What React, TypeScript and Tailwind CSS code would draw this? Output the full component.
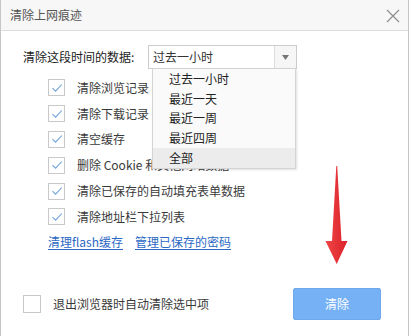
import React from "react";

const Check = () => (
  <svg width="12" height="10" viewBox="0 0 12 10" className="block">
    <path d="M1.5 5.2 L4.6 8.2 L10.8 1.5" fill="none" stroke="#6fa3db" strokeWidth="1.1" />
  </svg>
);

const CheckRow = ({ label, children }: { label?: string; children?: React.ReactNode }) => (
  <div className="h-[25.8px] flex items-center">
    <div className="w-[17px] h-[17px] border border-[#c9c9c9] bg-white flex items-center justify-center">
      <Check />
    </div>
    <span className="ml-[12px] text-[12px] text-[#3a3a3a] whitespace-nowrap leading-none">{label}{children}</span>
  </div>
);

export default function App() {
  const items = ["过去一小时", "最近一天", "最近一周", "最近四周", "全部"];
  return (
    <div className="w-[410px] h-[336px] bg-white relative overflow-hidden font-['Microsoft_YaHei','Noto_Sans_CJK_SC',sans-serif]">
      <div className="w-[409px] h-full border-l border-r border-[#c6c6c6] flex flex-col">
        <div className="h-[31px] shrink-0 bg-[#f7f7f7] border-b border-[#dedede] flex items-center justify-between pl-[9px] pr-[8px]">
          <span className="text-[12px] text-[#555] leading-none">清除上网痕迹</span>
          <svg width="14" height="14" viewBox="0 0 14 14" className="block mt-[1px]">
            <path d="M1 1 L13 13 M13 1 L1 13" stroke="#8a8a8a" strokeWidth="1.1" fill="none" />
          </svg>
        </div>
        <div className="pl-[22px] pt-[14px]">
          <div className="flex items-center h-[24px]">
            <span className="text-[12px] text-[#222] w-[125px] leading-none whitespace-nowrap">清除这段时间的数据:</span>
            <div className="relative w-[149px] h-[24px] border border-[#cccccc] bg-white flex items-center">
              <span className="pl-[4px] flex-1 text-[12px] text-[#333] leading-none">过去一小时</span>
              <div className="w-[22px] h-full border-l border-[#dddddd] bg-[#f6f6f6] flex items-center justify-center">
                <svg width="7" height="5" viewBox="0 0 7 5" className="block">
                  <path d="M0 0 L7 0 L3.5 5 Z" fill="#777" />
                </svg>
              </div>
              <div className="absolute left-[3px] top-[22px] w-[144px] h-[101px] bg-[#fafafa] border border-[#d4d4d4] shadow-[1px_1px_2px_rgba(0,0,0,0.12)] z-10 flex flex-col">
                {items.map((t, i) => (
                  <div
                    key={t}
                    className={
                      "h-[20px] flex items-center pl-[16px] text-[12px] text-[#222] leading-none " +
                      (i === 4 ? "bg-[#ececec]" : "")
                    }
                  >
                    {t}
                  </div>
                ))}
              </div>
            </div>
          </div>
          <div className="pl-[25px] mt-[6px]">
            <CheckRow label="清除浏览记录" />
            <CheckRow label="清除下载记录" />
            <CheckRow label="清空缓存" />
            <CheckRow label="删除 Cookie 和其他网站数据" />
            <CheckRow label="清除已保存的自动填充表单数据" />
            <CheckRow label="清除地址栏下拉列表" />
            <div className="h-[24px] flex items-center gap-[12px] text-[12px] text-[#2b68c4] leading-none">
              <span className="underline underline-offset-[2px]">清理flash缓存</span>
              <span className="underline underline-offset-[2px]">管理已保存的密码</span>
            </div>
          </div>
        </div>
        <div className="mt-auto pb-[16px] pl-[22px] pr-[27px] flex items-center justify-between">
          <div className="flex items-center">
            <div className="w-[18px] h-[18px] border border-[#c9c9c9] bg-white" />
            <span className="ml-[12px] text-[12px] text-[#3a3a3a] leading-none">退出浏览器时自动清除选中项</span>
          </div>
          <div className="w-[88px] h-[32px] rounded-[2px] bg-[#76b1f5] border border-[#6ea9ee] flex items-center justify-center text-[12px] text-white leading-none">
            清除
          </div>
        </div>
      </div>
      <svg width="26" height="100" viewBox="0 0 26 100" className="absolute left-[324px] top-[165px]">
        <defs>
          <linearGradient id="rg" x1="0" y1="0" x2="1" y2="0">
            <stop offset="0" stopColor="#f04545" />
            <stop offset="1" stopColor="#d9222b" />
          </linearGradient>
        </defs>
        <path d="M12.3 1 L13.2 1 L17.5 76 L23.5 76 L12.7 99 L1.5 76 L8 76 Z" fill="url(#rg)" />
      </svg>
    </div>
  );
}
